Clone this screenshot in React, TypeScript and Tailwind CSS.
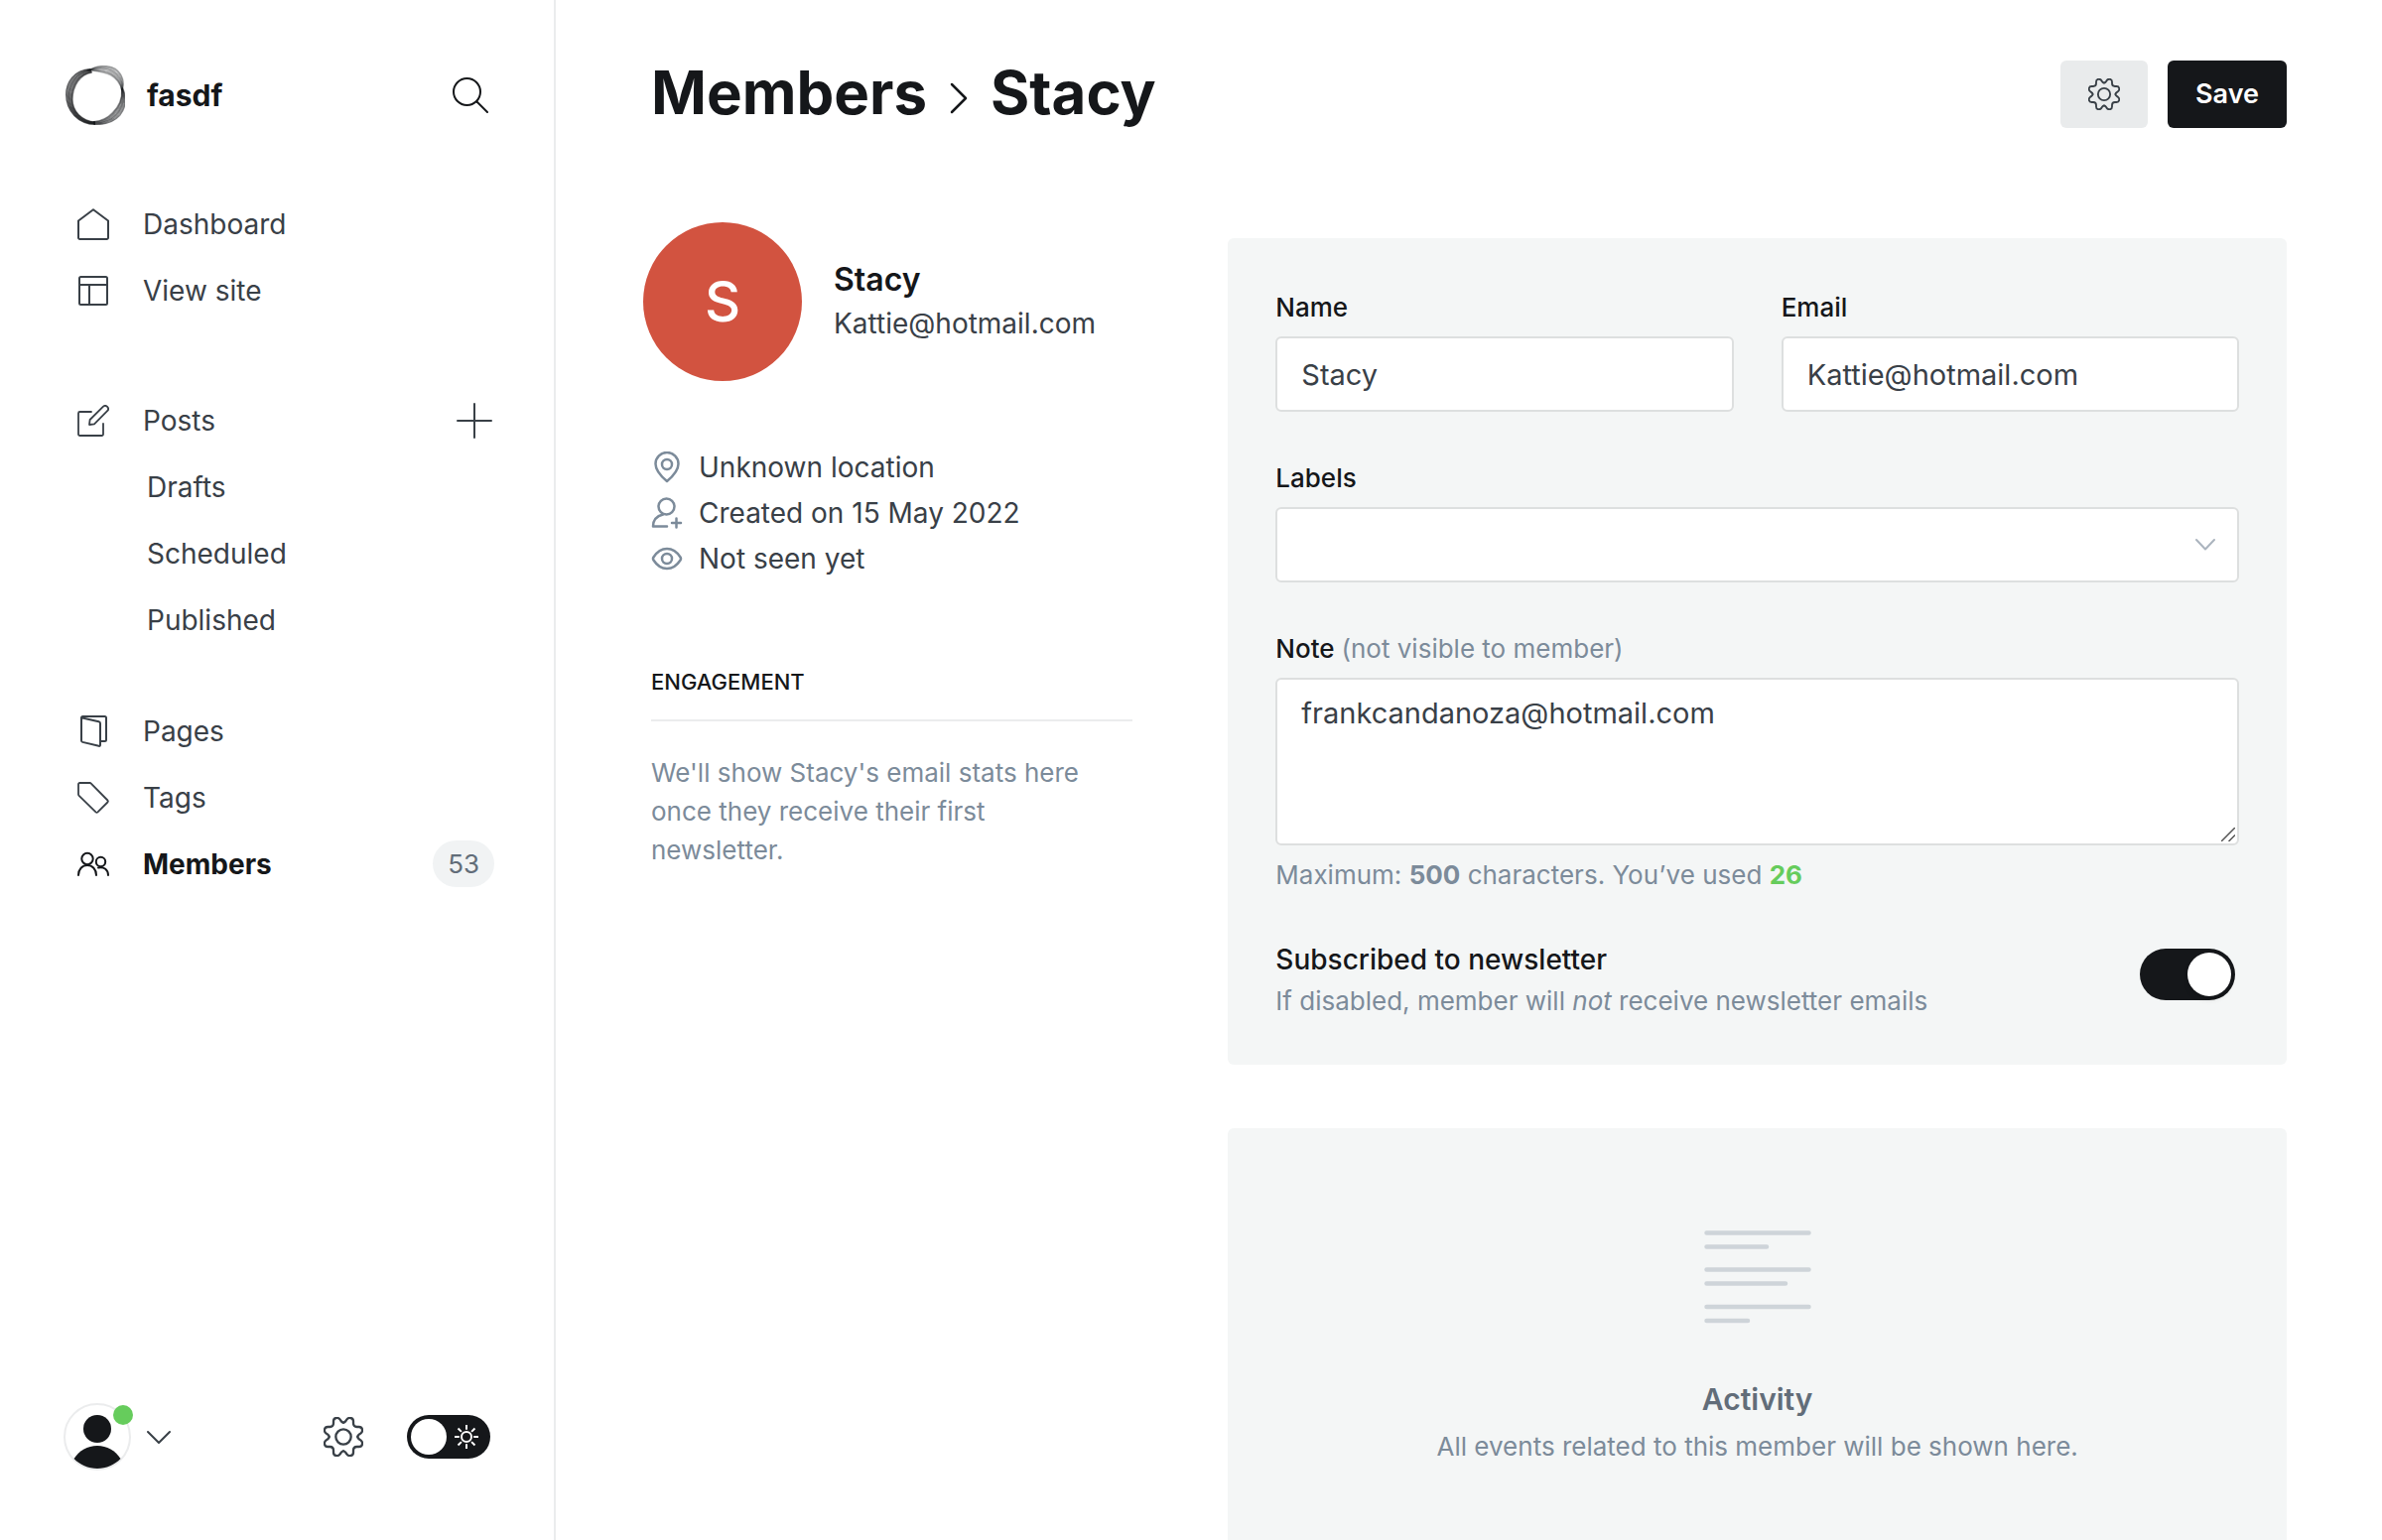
import { useState, type ReactNode } from "react";

type IconProps = { className?: string };

function Gear({ className }: IconProps) {
  const quarter =
    "M0 -43C6 -43 7 -48 10 -52C13 -56 17 -58 22 -57C28 -56 30 -52 30 -47L30 -41C30 -34 34 -30 41 -30L47 -30C52 -30 56 -28 57 -22C58 -17 56 -13 52 -10C48 -7 43 -6 43 0";
  return (
    <svg viewBox="-60 -60 120 120" fill="none" stroke="currentColor" strokeWidth="7" strokeLinecap="round" className={className} aria-hidden="true">
      {[0, 90, 180, 270].map((a) => (
        <path key={a} d={quarter} transform={`rotate(${a})`} />
      ))}
      <circle r="23" />
    </svg>
  );
}

function Stroke({ className, size = 32, width = 2, children }: IconProps & { size?: number; width?: number; children: ReactNode }) {
  return (
    <svg viewBox={`0 0 ${size} ${size}`} fill="none" stroke="currentColor" strokeWidth={width} strokeLinecap="round" strokeLinejoin="round" className={className} aria-hidden="true">
      {children}
    </svg>
  );
}

const icons = {
  home: (
    <Stroke className="size-8 shrink-0">
      <path d="M1 12.5V29.5a1.5 1.5 0 0 0 1.500 1.500H29.500a1.500 1.500 0 0 0 1.500-1.500V12.500L16 1.200Z" />
    </Stroke>
  ),
  site: (
    <Stroke className="size-8 shrink-0">
      <rect x="2" y="2" width="28" height="28" rx="1.500" />
      <path d="M2 10H30M12 10V30" />
    </Stroke>
  ),
  posts: (
    <Stroke className="size-8 shrink-0" width={1.8}>
      <path d="M14 7H2.500A1.500 1.500 0 0 0 1 8.500V29.500A1.500 1.500 0 0 0 2.500 31H24.500A1.500 1.500 0 0 0 26 29.500V19" />
      <path d="M12 20l.6-5L25.800 1.900a3 3 0 0 1 4.300 4.300L17 19.300Z" />
    </Stroke>
  ),
  pages: (
    <Stroke className="size-8 shrink-0">
      <path d="M4 2.200L21.500 6.200Q23 6.600 23 8V29.500Q23 31.300 21.500 30.800L5.200 26.900Q4 26.500 4 25.300V2.500Q4 1 5.500 1H27.500Q29 1 29 2.500V24.500Q29 26 27.500 26H24" />
    </Stroke>
  ),
  tags: (
    <Stroke className="size-8 shrink-0" width={1.8}>
      <path d="M1 2.500V12.500Q1 13.200 1.600 13.800L18.500 30.400Q19.500 31.300 20.500 30.400L30.400 20.500Q31.300 19.500 30.400 18.500L13.800 1.600Q13.200 1 12.500 1H2.500Q1 1 1 2.500Z" />
    </Stroke>
  ),
  members: (
    <Stroke className="size-8 shrink-0">
      <circle cx="10" cy="10.500" r="5.700" />
      <path d="M1 27C1 21 5 17 10 17S19 21 19 27" />
      <circle cx="23.500" cy="13.500" r="4.700" />
      <path d="M21 19.500C27 18 31 22 31 27" />
    </Stroke>
  ),
};

// Each band of the ring is a fan of strands between an outer and an inner curve:
// a start point followed by two cubic segments.
const bands = [
  {
    outer: [152, 88, 100, 90, 78, 130, 78, 165, 78, 215, 115, 255, 166, 255],
    inner: [156, 98, 120, 102, 97, 140, 97, 180, 97, 215, 125, 246, 166, 248],
    opacity: 0.55,
  },
  {
    outer: [148, 92, 168, 76, 205, 74, 228, 88, 250, 104, 254, 130, 248, 150],
    inner: [140, 90, 172, 94, 196, 96, 212, 106, 230, 116, 242, 132, 246, 152],
    opacity: 0.3,
  },
  {
    outer: [248, 144, 262, 175, 258, 205, 240, 228, 222, 248, 195, 257, 162, 255],
    inner: [246, 150, 248, 180, 236, 202, 218, 220, 203, 236, 185, 245, 160, 247],
    opacity: 0.42,
  },
];

function strand(outer: number[], inner: number[], t: number) {
  const p = outer.map((v, i) => (v + (inner[i] - v) * t).toFixed(1));
  return `M${p[0]} ${p[1]}C${p.slice(2, 8).join(" ")}C${p.slice(8).join(" ")}`;
}

function Logo() {
  return (
    <svg viewBox="76 77 180 180" className="size-15 shrink-0" fill="none" stroke="#15171a" strokeWidth="4" aria-hidden="true">
      {bands.map((band, b) => (
        <g key={b}>
          {[0, 0.15, 0.3, 0.45, 0.6, 0.75, 0.88, 1].map((t, i) => (
            <path key={t} d={strand(band.outer, band.inner, t)} opacity={i % 3 === 0 ? band.opacity + 0.1 : band.opacity} />
          ))}
        </g>
      ))}
    </svg>
  );
}

function NavLink({ icon, children, active, extra }: { icon?: ReactNode; children: ReactNode; active?: boolean; extra?: ReactNode }) {
  return (
    <li className="flex h-[67px] items-center justify-between">
      <a
        href="#"
        aria-current={active ? "page" : undefined}
        className={
          (active ? "font-bold text-[#15171a] " : "text-[#394047] ") +
          (icon ? "pl-3.5 " : "pl-[84px] ") +
          "flex grow items-center gap-[34px]"
        }
      >
        {icon}
        {children}
      </a>
      {extra}
    </li>
  );
}

function Sidebar() {
  const [night, setNight] = useState(false);
  return (
    <aside className="flex w-[560px] shrink-0 flex-col border-r-2 border-[#ebeced] pt-[66px] pr-[60px] pb-[70px] pl-16 text-[28px]">
      <div className="flex h-15 items-center">
        <div className="pl-0.5">
          <Logo />
        </div>
        <span className="ml-[22px] text-[30px] font-bold">fasdf</span>
        <button type="button" aria-label="Search" className="mr-1.5 ml-auto">
          <Stroke className="size-9" size={36}>
            <circle cx="14.500" cy="14.500" r="13.500" />
            <path d="M24.500 24.500L35 35" />
          </Stroke>
        </button>
      </div>

      <nav className="mt-[66px]" aria-label="Main">
        <ul>
          <NavLink icon={icons.home}>Dashboard</NavLink>
          <NavLink icon={icons.site}>View site</NavLink>
        </ul>
        <ul className="mt-16">
          <NavLink
            icon={icons.posts}
            extra={
              <button type="button" aria-label="New post" className="mr-0.5 text-[#394047]">
                <Stroke className="size-9" size={36}>
                  <path d="M18 1V35M1 18H35" />
                </Stroke>
              </button>
            }
          >
            Posts
          </NavLink>
          <NavLink>Drafts</NavLink>
          <NavLink>Scheduled</NavLink>
          <NavLink>Published</NavLink>
        </ul>
        <ul className="mt-[45px]">
          <NavLink icon={icons.pages}>Pages</NavLink>
          <NavLink icon={icons.tags}>Tags</NavLink>
          <NavLink
            active
            icon={icons.members}
            extra={<span className="flex h-[47px] items-center rounded-full bg-[#f1f3f4] px-[15px] text-[26px] text-[#626d79]">53</span>}
          >
            Members
          </NavLink>
        </ul>
      </nav>

      <div className="mt-auto flex items-center text-[#394047]">
        <button type="button" aria-label="Account menu" className="flex items-center gap-4">
          <span className="relative">
            <svg viewBox="0 0 68 68" className="size-17" aria-hidden="true">
              <circle cx="34" cy="34" r="33" fill="#fff" stroke="#ebeced" strokeWidth="2" />
              <circle cx="34" cy="26" r="14" fill="#15171a" />
              <path d="M10.500 56C16 48 24 43 34 43S52 48 57.500 56C52 62 43 66 34 66S16 62 10.500 56Z" fill="#15171a" />
            </svg>
            <span className="absolute top-0.5 -right-0.5 size-5 rounded-full bg-[#66cc5c]" />
          </span>
          <Stroke className="size-6" size={24}>
            <path d="M1 7L12 18L23 7" />
          </Stroke>
        </button>
        <button type="button" aria-label="Settings" className="mr-11 ml-auto">
          <Gear className="size-10" />
        </button>
        <button
          type="button"
          role="switch"
          aria-checked={night}
          aria-label="Night mode"
          onClick={() => setNight(!night)}
          className="mr-1 flex h-11 w-21 items-center justify-between rounded-full bg-[#15171a] pr-3 pl-1 text-white"
        >
          <span className="size-9 rounded-full bg-white" />
          <svg viewBox="-12 -12 24 24" fill="none" stroke="currentColor" strokeWidth="2" className="size-6" aria-hidden="true">
            <circle r="5" />
            {[0, 45, 90, 135, 180, 225, 270, 315].map((a) => (
              <path key={a} d="M0 -12V-7.200" transform={`rotate(${a})`} />
            ))}
          </svg>
        </button>
      </div>
    </aside>
  );
}

function Profile() {
  return (
    <section>
      <div className="-ml-2 flex items-center gap-8 leading-[44px]">
        <div className="flex size-40 shrink-0 items-center justify-center rounded-full bg-[#d25340] text-[56px] font-medium text-white">S</div>
        <div>
          <h2 className="text-[32px] font-semibold">Stacy</h2>
          <p className="text-[28px] text-[#394047]">Kattie@hotmail.com</p>
        </div>
      </div>

      <ul className="mt-16 text-[28px] leading-[46px] text-[#394047]">
        <li className="flex items-center gap-4">
          <Stroke className="size-8 text-[#7c8b9a]" width={2.5}>
            <path d="M16 30C10 25 4.500 19 4.500 12.500A11.500 11.500 0 0 1 27.500 12.500C27.500 19 22 25 16 30Z" />
            <circle cx="16" cy="13" r="5" />
          </Stroke>
          Unknown location
        </li>
        <li className="flex items-center gap-4">
          <Stroke className="size-8 text-[#7c8b9a]" width={2.5}>
            <circle cx="15.500" cy="9.500" r="8" />
            <path d="M12 17.500C6 19 2 23 2 29.500H16M25.500 21.500V30.500M21 26H30" />
          </Stroke>
          Created on 15 May 2022
        </li>
        <li className="flex items-center gap-4">
          <Stroke className="size-8 text-[#7c8b9a]" width={2.5}>
            <path d="M2.500 14.500C6 9 11 6 16 6S26 9 29.500 14.500Q30.500 16 29.500 17.500C26 23 21 26 16 26S6 23 2.500 17.500Q1.500 16 2.500 14.500Z" />
            <circle cx="16" cy="16" r="5" />
          </Stroke>
          Not seen yet
        </li>
      </ul>

      <h3 className="mt-[81px] border-b-2 border-[#ebeced] pb-[18px] text-[22px] leading-[40px] font-medium uppercase">Engagement</h3>
      <p className="mt-8 max-w-[450px] text-[26px] leading-[39px] text-[#7c8b9a]">
        We'll show Stacy's email stats here once they receive their first newsletter.
      </p>
    </section>
  );
}

const labelClass = "mb-2 block text-[26px] leading-[43px] font-medium";
const fieldClass = "block w-full rounded-md border-2 border-[#dddfdf] bg-white px-6 text-[29px] text-[#394047]";

function MemberForm() {
  const [note, setNote] = useState("frankcandanoza@hotmail.com");
  const [subscribed, setSubscribed] = useState(true);
  return (
    <form className="flex flex-col gap-[45px] rounded-md bg-[#f4f6f6] px-12 pt-12 pb-[43px]">
      <div className="grid grid-cols-2 gap-12">
        <div>
          <label htmlFor="name" className={labelClass}>Name</label>
          <input id="name" type="text" defaultValue="Stacy" className={fieldClass + " h-19"} />
        </div>
        <div>
          <label htmlFor="email" className={labelClass}>Email</label>
          <input id="email" type="email" defaultValue="Kattie@hotmail.com" className={fieldClass + " h-19"} />
        </div>
      </div>

      <div>
        <label htmlFor="labels" className={labelClass}>Labels</label>
        <div className="relative">
          <select id="labels" defaultValue="" className={fieldClass + " h-19 appearance-none"}>
            <option value="" />
          </select>
          <Stroke className="pointer-events-none absolute top-7 right-6 size-5 text-[#abb4be]" size={20}>
            <path d="M1 5L10 14.500L19 5" />
          </Stroke>
        </div>
      </div>

      <div>
        <label htmlFor="note" className={labelClass}>
          Note <span className="font-normal text-[#7c8b9a]">(not visible to member)</span>
        </label>
        <div className="relative">
          <textarea
            id="note"
            value={note}
            onChange={(e) => setNote(e.target.value)}
            className={fieldClass + " h-[169px] resize-none pt-3 leading-[44px]"}
          />
          <svg viewBox="0 0 14 14" className="pointer-events-none absolute right-1 bottom-1 size-3.5" stroke="#555" strokeWidth="1.500" aria-hidden="true">
            <path d="M0 14L14 0M7.500 14L14 7.500" />
          </svg>
        </div>
        <p className="mt-2.5 text-[26px] leading-[39px] text-[#7c8b9a]">
          Maximum: <b>500</b> characters. You’ve used <b className="text-[#66cc5c]">{note.length}</b>
        </p>
      </div>

      <div className="flex items-start justify-between leading-[42px]">
        <div>
          <label htmlFor="subscribed" className="block text-[28px] font-medium">Subscribed to newsletter</label>
          <p className="text-[26px] text-[#7c8b9a]">
            If disabled, member will <em>not</em> receive newsletter emails
          </p>
        </div>
        <button
          id="subscribed"
          type="button"
          role="switch"
          aria-checked={subscribed}
          onClick={() => setSubscribed(!subscribed)}
          className={(subscribed ? "justify-end " : "justify-start ") + "mt-2.5 mr-1 flex h-13 w-24 shrink-0 items-center rounded-full bg-[#15171a] p-1"}
        >
          <span className="size-11 rounded-full bg-white shadow-md" />
        </button>
      </div>
    </form>
  );
}

function Activity() {
  return (
    <section className="mt-16 flex flex-col items-center rounded-md bg-[#f4f6f6] pt-[103px] pb-24 leading-12">
      <svg viewBox="0 0 108 94" className="mb-[52px] h-[94px] w-[108px]" stroke="#ced4d9" strokeWidth="4.500" strokeLinecap="round" aria-hidden="true">
        <path d="M2.500 2.500H105.500M2.500 16.500H63M2.500 39.500H105.500M2.500 53.500H82M2.500 77H105.500M2.500 91H44" />
      </svg>
      <h3 className="text-[30px] font-semibold text-[#626d79]">Activity</h3>
      <p className="text-[26px] text-[#7c8b9a]">All events related to this member will be shown here.</p>
    </section>
  );
}

export default function App() {
  return (
    <div className="flex h-screen overflow-hidden bg-white font-['Inter',sans-serif] text-[#15171a]">
      <Sidebar />
      <main className="min-w-0 grow overflow-hidden px-24 pt-[61px]">
        <header className="flex h-17 items-start">
          <h1 className="flex items-center text-[60px] leading-[64px] font-bold">
            <a href="#">Members</a>
            <Stroke className="mx-4 mt-3 size-8" width={2.5}>
              <path d="M9 2L23 16L9 30" />
            </Stroke>
            Stacy
          </h1>
          <button type="button" aria-label="Member actions" className="ml-auto flex h-17 w-22 items-center justify-center rounded-md bg-[#e9ebec] text-[#394047]">
            <Gear className="size-8" />
          </button>
          <button type="button" className="ml-5 h-17 rounded-md bg-[#15171a] px-7 text-[27px] font-semibold text-white">Save</button>
        </header>

        <div className="grid grid-cols-3 gap-24 pt-[95px]">
          <Profile />
          <div className="col-span-2 mt-4">
            <MemberForm />
            <Activity />
          </div>
        </div>
      </main>
    </div>
  );
}
